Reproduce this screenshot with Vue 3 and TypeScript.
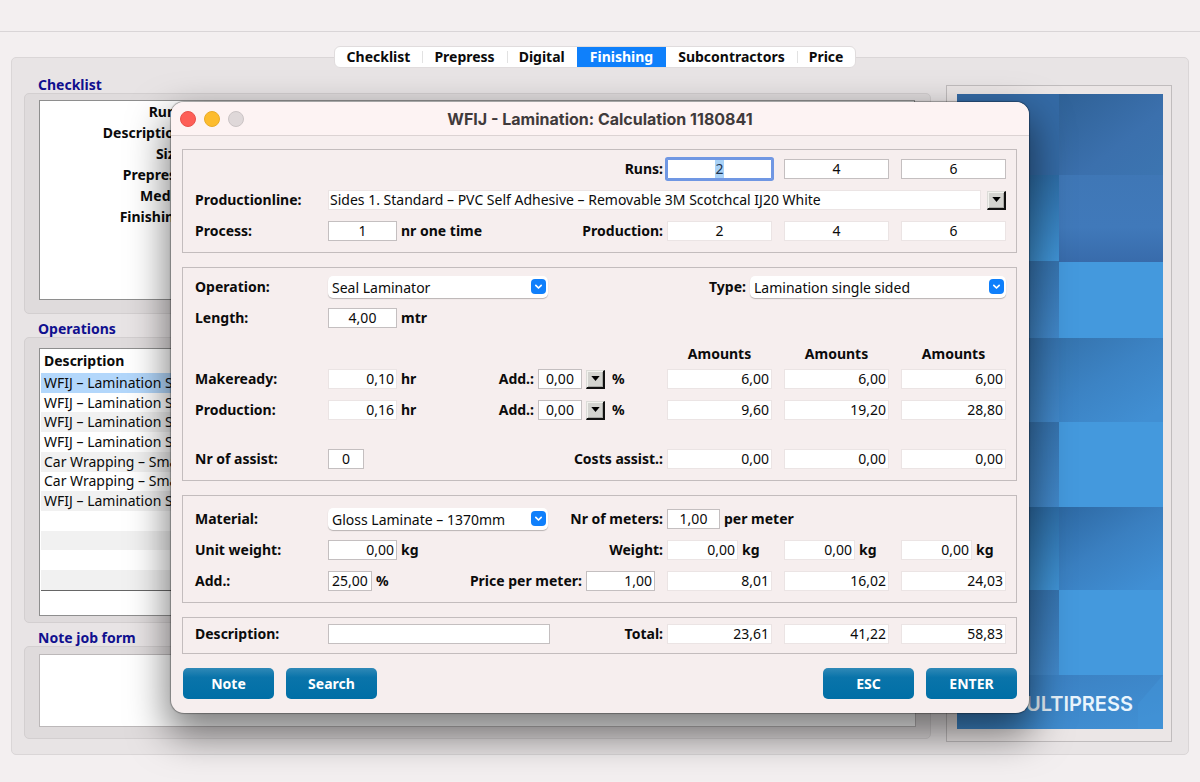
<script setup lang="ts">
import { onMounted, ref } from 'vue'

const tabs: string[] = ['Checklist', 'Prepress', 'Digital', 'Finishing', 'Subcontractors', 'Price']
const activeTab = ref('Finishing')

const checklist: string[] = ['Runs:', 'Description:', 'Size:', 'Prepress:', 'Media:', 'Finishing:']

const operations: string[] = [
  'WFIJ – Lamination Seal',
  'WFIJ – Lamination Seal',
  'WFIJ – Lamination Seal',
  'WFIJ – Lamination Seal',
  'Car Wrapping – Small',
  'Car Wrapping – Small',
  'WFIJ – Lamination Seal',
  '\u00a0',
  '\u00a0',
  '\u00a0',
  '\u00a0',
]

const runs = ref<string[]>(['2', '4', '6'])
const production: string[] = ['2', '4', '6']
const makereadyAmounts: string[] = ['6,00', '6,00', '6,00']
const productionAmounts: string[] = ['9,60', '19,20', '28,80']
const assistAmounts: string[] = ['0,00', '0,00', '0,00']
const weights: string[] = ['0,00', '0,00', '0,00']
const prices: string[] = ['8,01', '16,02', '24,03']
const totals: string[] = ['23,61', '41,22', '58,83']

const runInputs = ref<HTMLInputElement[]>([])

onMounted(() => {
  const first = runInputs.value[0]
  if (first) {
    first.focus()
    first.select()
  }
})
</script>

<template>
  <div class="app">
    <div class="toolbar"></div>

    <nav class="tabs">
      <button
        v-for="tab in tabs"
        :key="tab"
        type="button"
        class="tab"
        :class="{ active: tab === activeTab }"
        @click="activeTab = tab"
      >{{ tab }}</button>
    </nav>

    <main class="workspace">
      <div class="left">
        <h2 class="heading">Checklist</h2>
        <section class="frame checklist">
          <div class="sheet">
            <p v-for="item in checklist" :key="item">{{ item }}</p>
          </div>
        </section>

        <h2 class="heading">Operations</h2>
        <section class="frame operations">
          <div class="sheet">
            <table>
              <thead>
                <tr><th>Description</th></tr>
              </thead>
              <tbody>
                <tr v-for="(name, i) in operations" :key="i" :class="{ selected: i === 0 }">
                  <td>{{ name }}</td>
                </tr>
              </tbody>
            </table>
            <div class="table-foot"></div>
          </div>
        </section>

        <h2 class="heading">Note job form</h2>
        <section class="frame note">
          <textarea class="sheet" aria-label="Note job form"></textarea>
        </section>
      </div>

      <aside class="banner">
        <svg class="art" viewBox="0 0 206 635" preserveAspectRatio="none" aria-hidden="true">
          <defs>
            <linearGradient id="fold-a" x1="0" y1="0" x2="1" y2="1">
              <stop offset="0" stop-color="#2f6196" /><stop offset="0.6" stop-color="#3b70ad" /><stop offset="1" stop-color="#3c75b1" />
            </linearGradient>
            <linearGradient id="fold-b" x1="0" y1="0" x2="0" y2="1">
              <stop offset="0" stop-color="#3f77b6" /><stop offset="0.6" stop-color="#4079ba" /><stop offset="1" stop-color="#386bab" />
            </linearGradient>
            <linearGradient id="fold-c" x1="0" y1="0" x2="0.8" y2="1">
              <stop offset="0" stop-color="#3573ad" /><stop offset="0.5" stop-color="#3c83c4" /><stop offset="1" stop-color="#418fd3" />
            </linearGradient>
            <linearGradient id="fold-d" x1="0" y1="0" x2="0.8" y2="1">
              <stop offset="0" stop-color="#2d68a2" /><stop offset="0.5" stop-color="#3a7fc0" /><stop offset="1" stop-color="#408fd4" />
            </linearGradient>
            <linearGradient id="fold-e" x1="0" y1="0" x2="0" y2="1">
              <stop offset="0" stop-color="#2d6ca5" /><stop offset="1" stop-color="#4094d6" />
            </linearGradient>
            <linearGradient id="fold-f" x1="0" y1="0" x2="0" y2="1">
              <stop offset="0" stop-color="#3673ae" /><stop offset="1" stop-color="#4289cb" />
            </linearGradient>
            <linearGradient id="fold-g" x1="0" y1="0" x2="1" y2="1">
              <stop offset="0" stop-color="#3a7dbe" /><stop offset="1" stop-color="#4191d5" />
            </linearGradient>
          </defs>
          <rect width="206" height="635" fill="#4499dd" />
          <rect width="102" height="81" fill="#346aa5" />
          <rect x="102" width="104" height="82" fill="url(#fold-a)" />
          <rect y="81" width="102" height="86" fill="url(#fold-e)" />
          <rect x="102" y="81" width="104" height="87" fill="url(#fold-b)" />
          <rect y="167" width="102" height="78" fill="url(#fold-f)" />
          <rect y="244" width="102" height="85" fill="url(#fold-f)" />
          <rect x="102" y="244" width="104" height="84" fill="url(#fold-c)" />
          <rect y="328" width="102" height="85" fill="url(#fold-f)" />
          <rect y="413" width="102" height="84" fill="url(#fold-e)" />
          <rect x="102" y="413" width="104" height="83" fill="url(#fold-d)" />
          <rect y="496" width="102" height="85" fill="url(#fold-f)" />
          <rect y="581" width="206" height="54" fill="url(#fold-g)" />
          <path d="M206 581L181 610V635H206Z" fill="#4294d8" opacity="0.5" />
        </svg>
        <span class="brand">MULTIPRESS</span>
      </aside>
    </main>

    <div class="overlay">
      <form class="dialog" role="dialog" aria-labelledby="dialog-title" @submit.prevent>
        <header class="titlebar">
          <div class="lights">
            <button type="button" class="light red" aria-label="Close"></button>
            <button type="button" class="light amber" aria-label="Minimise"></button>
            <button type="button" class="light grey" aria-label="Zoom" disabled></button>
          </div>
          <h1 id="dialog-title">WFIJ - Lamination: Calculation 1180841</h1>
        </header>

        <div class="body">
          <section class="group">
            <div class="row">
              <div class="mid end"><label for="runs-0">Runs:</label></div>
              <div class="amounts">
                <input
                  v-for="(_, i) in runs"
                  :id="`runs-${i}`"
                  :key="i"
                  ref="runInputs"
                  v-model="runs[i]"
                  class="field center"
                  :aria-label="`Runs ${i + 1}`"
                />
              </div>
            </div>
            <div class="row">
              <label class="name" for="line">Productionline:</label>
              <input id="line" class="field quiet wide" readonly value="Sides 1. Standard – PVC Self Adhesive – Removable 3M Scotchcal IJ20 White" />
              <button type="button" class="drop" aria-label="Choose production line">
                <svg viewBox="0 0 10 6"><path d="M0 0H10L5 6Z" /></svg>
              </button>
            </div>
            <div class="row">
              <label class="name" for="process">Process:</label>
              <div class="mid">
                <input id="process" class="field w-m center" value="1" />
                <span>nr one time</span>
                <label class="push" for="production-0">Production:</label>
              </div>
              <div class="amounts">
                <input v-for="(v, i) in production" :id="`production-${i}`" :key="i" class="field quiet center" readonly :value="v" :aria-label="`Production ${i + 1}`" />
              </div>
            </div>
          </section>

          <section class="group">
            <div class="row">
              <label class="name" for="operation">Operation:</label>
              <div class="select">
                <select id="operation"><option>Seal Laminator</option></select>
                <svg viewBox="0 0 15 15"><rect width="15" height="15" rx="4" /><path d="M4.8 6.3L7.5 9L10.2 6.3" /></svg>
              </div>
              <label class="push" for="type">Type:</label>
              <div class="select large">
                <select id="type"><option>Lamination single sided</option></select>
                <svg viewBox="0 0 15 15"><rect width="15" height="15" rx="4" /><path d="M4.8 6.3L7.5 9L10.2 6.3" /></svg>
              </div>
            </div>
            <div class="row">
              <label class="name" for="length">Length:</label>
              <input id="length" class="field w-m center" value="4,00" />
              <span>mtr</span>
            </div>
            <div class="headed">
              <div class="row">
                <div class="mid"></div>
                <div class="amounts captions"><span>Amounts</span><span>Amounts</span><span>Amounts</span></div>
              </div>
              <div class="row">
                <label class="name" for="makeready">Makeready:</label>
                <div class="mid">
                  <input id="makeready" class="field quiet w-m right" readonly value="0,10" />
                  <span>hr</span>
                  <label class="push" for="add-makeready">Add.:</label>
                  <input id="add-makeready" class="field w-s center" value="0,00" />
                  <button type="button" class="drop" aria-label="Choose makeready addition">
                    <svg viewBox="0 0 10 6"><path d="M0 0H10L5 6Z" /></svg>
                  </button>
                  <span class="percent">%</span>
                </div>
                <div class="amounts">
                  <input v-for="(v, i) in makereadyAmounts" :key="i" class="field quiet right" readonly :value="v" :aria-label="`Makeready amount ${i + 1}`" />
                </div>
              </div>
            </div>
            <div class="row">
              <label class="name" for="production-time">Production:</label>
              <div class="mid">
                <input id="production-time" class="field quiet w-m right" readonly value="0,16" />
                <span>hr</span>
                <label class="push" for="add-production">Add.:</label>
                <input id="add-production" class="field w-s center" value="0,00" />
                <button type="button" class="drop" aria-label="Choose production addition">
                  <svg viewBox="0 0 10 6"><path d="M0 0H10L5 6Z" /></svg>
                </button>
                <span class="percent">%</span>
              </div>
              <div class="amounts">
                <input v-for="(v, i) in productionAmounts" :key="i" class="field quiet right" readonly :value="v" :aria-label="`Production amount ${i + 1}`" />
              </div>
            </div>
            <div class="row apart">
              <label class="name" for="assist">Nr of assist:</label>
              <div class="mid">
                <input id="assist" class="field w-xs center" value="0" />
                <label class="push" for="assist-cost-0">Costs assist.:</label>
              </div>
              <div class="amounts">
                <input v-for="(v, i) in assistAmounts" :id="`assist-cost-${i}`" :key="i" class="field quiet right" readonly :value="v" :aria-label="`Costs assist ${i + 1}`" />
              </div>
            </div>
          </section>

          <section class="group material">
            <div class="row">
              <label class="name" for="material">Material:</label>
              <div class="mid">
                <div class="select">
                  <select id="material"><option>Gloss Laminate – 1370mm</option></select>
                  <svg viewBox="0 0 15 15"><rect width="15" height="15" rx="4" /><path d="M4.8 6.3L7.5 9L10.2 6.3" /></svg>
                </div>
                <label class="push" for="meters">Nr of meters:</label>
              </div>
              <div class="amounts unit">
                <input id="meters" class="field center" value="1,00" />
                <span>per meter</span>
              </div>
            </div>
            <div class="row">
              <label class="name" for="unit-weight">Unit weight:</label>
              <div class="mid">
                <input id="unit-weight" class="field w-m right" value="0,00" />
                <span>kg</span>
                <label class="push" for="weight-0">Weight:</label>
              </div>
              <div class="amounts">
                <div v-for="(v, i) in weights" :key="i" class="weight">
                  <input :id="`weight-${i}`" class="field quiet right" readonly :value="v" :aria-label="`Weight ${i + 1}`" />
                  <span>kg</span>
                </div>
              </div>
            </div>
            <div class="row">
              <label class="name" for="add-material">Add.:</label>
              <div class="mid priced">
                <input id="add-material" class="field w-s center" value="25,00" />
                <span>%</span>
                <label class="push" for="price">Price per meter:</label>
                <input id="price" class="field w-m right" value="1,00" />
              </div>
              <div class="amounts">
                <input v-for="(v, i) in prices" :key="i" class="field quiet right" readonly :value="v" :aria-label="`Price ${i + 1}`" />
              </div>
            </div>
          </section>

          <section class="group total">
            <div class="row">
              <label class="name" for="description">Description:</label>
              <div class="mid">
                <input id="description" class="field w-l" />
                <label class="push" for="total-0">Total:</label>
              </div>
              <div class="amounts">
                <input v-for="(v, i) in totals" :id="`total-${i}`" :key="i" class="field quiet right" readonly :value="v" :aria-label="`Total ${i + 1}`" />
              </div>
            </div>
          </section>

          <footer class="actions">
            <button type="button">Note</button>
            <button type="button">Search</button>
            <button type="button" class="push">ESC</button>
            <button type="submit">ENTER</button>
          </footer>
        </div>
      </form>
    </div>
  </div>
</template>

<style>
body {
  margin: 0;
  background: #f3eff0;
}
</style>

<style scoped>
.app {
  position: relative;
  min-height: 100vh;
  box-sizing: border-box;
  padding-bottom: 27px;
  overflow: hidden;
  background: #f3eff0;
  color: #0b0b0b;
  font: 14px/20px 'Noto Sans', 'Open Sans', sans-serif;
}
.app *,
.app *::before {
  box-sizing: border-box;
}
button,
input,
select,
textarea {
  margin: 0;
  font: inherit;
  color: inherit;
}
.push {
  margin-left: auto;
}

.toolbar {
  height: 32px;
  border-bottom: 1px solid #d9d5d7;
}
.tabs {
  position: relative;
  z-index: 1;
  display: flex;
  width: fit-content;
  margin: 14px auto -11px;
  left: -5px;
  overflow: hidden;
  border: 1px solid #e0dcdd;
  border-radius: 6px;
  background: #fff;
}
.tab {
  position: relative;
  height: 20px;
  padding: 0 12px;
  border: 0;
  background: none;
  font-weight: 700;
  line-height: 20px;
}
.tab + .tab::before {
  content: '';
  position: absolute;
  left: 0;
  top: 4px;
  bottom: 4px;
  width: 1px;
  background: #e2e2e2;
}
.tab.active {
  padding: 0 13px;
  background: #0f80fb;
  color: #fff;
}
.tab.active::before,
.tab.active + .tab::before {
  display: none;
}

.workspace {
  display: flex;
  align-items: stretch;
  gap: 15px;
  margin: 0 11px;
  padding: 17px 16px 12px 12px;
  border: 1px solid #dad6d7;
  border-radius: 5px;
  background: #e8e4e5;
}
.left {
  flex: 1;
  min-width: 0;
  padding-bottom: 3px;
}
.heading {
  margin: 0;
  padding-left: 14px;
  height: 23px;
  color: #10108f;
  font-size: 14px;
  font-weight: 700;
  line-height: 30px;
}
.heading:first-child {
  height: 18px;
  line-height: 20px;
}
.frame {
  padding: 6px 15px 13px 14px;
  border: 1px solid #d3cfd0;
  border-radius: 5px;
  background: #dfdbdc;
}
.sheet {
  display: block;
  width: 100%;
  border: 1px solid #8e8e8e;
  background: #fff;
}
.checklist .sheet {
  height: 200px;
}
.checklist p {
  width: 147px;
  margin: 0;
  text-align: right;
  font-weight: 700;
  line-height: 21px;
}
.operations {
  padding-top: 10px;
  padding-bottom: 6px;
}
.operations .sheet {
  padding: 0 1px;
}
table {
  width: 100%;
  height: 241px;
  border-collapse: collapse;
}
th,
td {
  padding: 0 3px;
  text-align: left;
  line-height: 18px;
}
th {
  height: 24px;
}
tbody tr:nth-child(odd) td {
  background: #f1f1f1;
}
tbody tr.selected td {
  background: #b3d7fb;
}
.table-foot {
  height: 25px;
  border-top: 1px solid #666;
}
.note {
  padding: 7px 14px 11px;
}
.note .sheet {
  height: 73px;
  border-color: #bcb8b9;
  outline: 0;
  resize: none;
}

.banner {
  position: relative;
  width: 226px;
  margin-top: 10px;
  padding: 8px 8px 12px 10px;
  border: 1px solid #c0bcbd;
  background: #ebe6e6;
}
.art {
  display: block;
  width: 100%;
  height: 635px;
}
.brand {
  position: absolute;
  right: 38px;
  bottom: 24px;
  color: #e9f5fd;
  font: 600 20px/26px Inter, sans-serif;
}

.overlay {
  position: absolute;
  inset: 0;
  padding: 102px 171px 0;
}
.dialog {
  border-radius: 13px;
  background: #f6eeee;
  box-shadow:
    0 0 1px 1px rgba(0, 0, 0, 0.3),
    0 18px 38px 4px rgba(0, 0, 0, 0.5);
}
.titlebar {
  position: relative;
  display: flex;
  align-items: center;
  justify-content: center;
  height: 34px;
  border-bottom: 1px solid #dcd3d3;
  border-radius: 13px 13px 0 0;
  background: #fdf3f3;
}
.titlebar h1 {
  margin: 0;
  color: #403a3b;
  font: 700 16px/24px Inter, sans-serif;
}
.lights {
  position: absolute;
  left: 9px;
  display: flex;
  gap: 8px;
}
.light {
  width: 16px;
  height: 16px;
  padding: 0;
  border: 1px solid;
  border-radius: 50%;
}
.red {
  border-color: #e8514b;
  background: #fe5e57;
}
.amber {
  border-color: #e9ab28;
  background: #fdbc2e;
}
.grey {
  border-color: #cbc4c5;
  background: #dfd8d9;
}

.body {
  display: flex;
  flex-direction: column;
  gap: 14px;
  padding: 13px 12px 14px 11px;
}
.group {
  display: flex;
  flex-direction: column;
  gap: 11px;
  padding: 9px 10px 11px 12px;
  border: 1px solid #c3bcbd;
}
.material {
  padding-top: 13px;
}
.total {
  padding-top: 6px;
  padding-bottom: 9px;
}
.row {
  display: flex;
  align-items: center;
  gap: 4px;
  height: 20px;
  font-weight: 700;
  white-space: nowrap;
}
.name {
  width: 129px;
}
.mid {
  display: flex;
  flex: 1;
  align-items: center;
  gap: 4px;
  min-width: 0;
}
.mid.end {
  justify-content: flex-end;
}
.priced {
  padding-right: 8px;
}
.amounts {
  display: grid;
  grid-template-columns: repeat(3, 1fr);
  gap: 12px;
  width: 339px;
}
.captions {
  text-align: center;
}
.unit {
  grid-template-columns: 53px 1fr;
  gap: 4px;
}
.weight {
  display: grid;
  grid-template-columns: 71px 1fr;
  gap: 4px;
}
.headed {
  display: grid;
  gap: 5px;
  margin-top: 5px;
}
.apart {
  margin-top: 18px;
}
.percent {
  width: 54px;
  padding-left: 3px;
}

.field {
  width: 100%;
  min-width: 0;
  height: 20px;
  padding: 0 2px;
  border: 1px solid #c4bfc0;
  border-radius: 0;
  outline: 0;
  background: #fff;
  font-weight: 400;
}
.field.quiet {
  border-color: #ebe4e4;
}
.field:focus {
  box-shadow: 0 0 0 2px #7097e3;
  border-color: #7097e3;
  border-radius: 1px;
}
.field::selection {
  background: #a9d2f7;
  color: #1c3450;
}
.center {
  text-align: center;
}
.right {
  text-align: right;
}
.field.w-xs {
  width: 36px;
}
.field.w-s {
  width: 44px;
  padding: 0;
}
.field.w-m {
  width: 69px;
}
.field.w-l {
  width: 222px;
}
.field.wide {
  flex: 1;
  padding: 0 1px;
  margin-right: 2px;
}
.drop {
  display: flex;
  align-items: center;
  justify-content: center;
  width: 19px;
  height: 19px;
  padding: 0;
  border: 1px solid #dcdcd8;
  border-right: 2px solid #111;
  border-bottom: 2px solid #111;
  background: #d3d3cf;
  box-shadow: inset 1px 1px 0 #f2f2ee, inset -1px -1px 0 #a9a9a5;
}
.drop svg {
  width: 9px;
  height: 5px;
}
.select {
  position: relative;
  width: 220px;
}
.select.large {
  width: 256px;
}
.select select {
  display: block;
  width: 100%;
  height: 22px;
  padding: 2px 24px 0 4px;
  appearance: none;
  border: 0;
  border-radius: 5px;
  outline: 0;
  background: #fff;
  box-shadow: 0 1px 1px rgba(0, 0, 0, 0.25);
  font-weight: 400;
}
.select svg {
  position: absolute;
  top: 3px;
  right: 2px;
  width: 15px;
  height: 15px;
  pointer-events: none;
}
.select rect {
  fill: #0f7ffb;
}
.select path {
  fill: none;
  stroke: #fff;
  stroke-width: 1.7;
  stroke-linecap: round;
  stroke-linejoin: round;
}

.actions {
  display: flex;
  gap: 12px;
  padding-left: 1px;
}
.actions button {
  width: 91px;
  height: 31px;
  padding: 0;
  border: 0;
  border-radius: 5px;
  background: linear-gradient(#3089b7, #0a74aa 30%, #006fa6);
  color: #fff;
  font-weight: 700;
}
</style>
